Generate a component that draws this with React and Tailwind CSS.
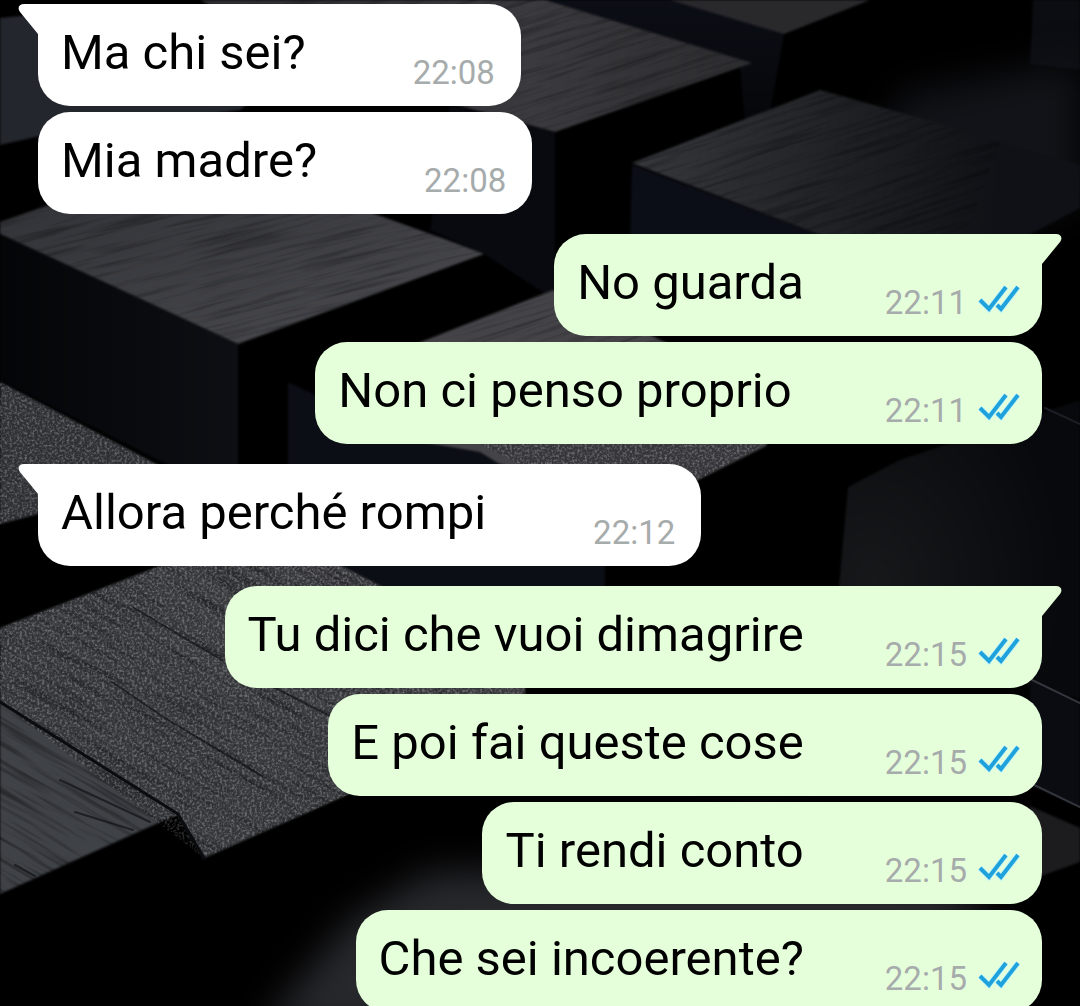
import React from "react";

const messages = [
  { id: 1, text: "Ma chi sei?", time: "22:08", sent: false, first: true },
  { id: 2, text: "Mia madre?", time: "22:08", sent: false, first: false },
  { id: 3, text: "No guarda", time: "22:11", sent: true, first: true },
  { id: 4, text: "Non ci penso proprio ", time: "22:11", sent: true, first: false },
  { id: 5, text: "Allora perché rompi", time: "22:12", sent: false, first: true },
  { id: 6, text: "Tu dici che vuoi dimagrire", time: "22:15", sent: true, first: true },
  { id: 7, text: "E poi fai queste cose", time: "22:15", sent: true, first: false },
  { id: 8, text: "Ti rendi conto", time: "22:15", sent: true, first: false },
  { id: 9, text: "Che sei incoerente?", time: "22:15", sent: true, first: false },
];

// Dark wooden blocks behind the conversation
const Wallpaper = () => (
  <svg
    className="absolute inset-0 h-full w-full"
    viewBox="0 0 1080 1006"
    preserveAspectRatio="xMidYMid slice"
    aria-hidden="true"
  >
    <defs>
      <linearGradient id="side" x1="0" y1="0" x2="0" y2="1">
        <stop offset="0" stopColor="#0c0e16" />
        <stop offset="1" stopColor="#06070a" />
      </linearGradient>
      <linearGradient id="leftSide" x1="0" y1="0" x2="1" y2="0">
        <stop offset="0" stopColor="#040507" />
        <stop offset="1" stopColor="#0d0f14" />
      </linearGradient>
      <linearGradient id="topBack" x1="0" y1="0" x2="1" y2="0">
        <stop offset="0" stopColor="#2c2c30" />
        <stop offset="0.6" stopColor="#3b3b3f" />
        <stop offset="1" stopColor="#2c2c2f" />
      </linearGradient>
      <linearGradient id="topRight" gradientUnits="userSpaceOnUse" x1="640" y1="170" x2="1000" y2="190">
        <stop offset="0" stopColor="#36373c" />
        <stop offset="0.5" stopColor="#222326" />
        <stop offset="1" stopColor="#101116" />
      </linearGradient>
      <linearGradient id="topLeft" x1="0" y1="0" x2="1" y2="1">
        <stop offset="0" stopColor="#303136" />
        <stop offset="1" stopColor="#4b4b50" />
      </linearGradient>
      <linearGradient id="topFront" x1="0" y1="1" x2="1" y2="0">
        <stop offset="0" stopColor="#3f4247" />
        <stop offset="1" stopColor="#4c4c50" />
      </linearGradient>
      <radialGradient id="glow" cx="0.15" cy="0.6" r="0.8">
        <stop offset="0" stopColor="#17181a" />
        <stop offset="1" stopColor="#08090c" />
      </radialGradient>
      <filter id="soft" colorInterpolationFilters="sRGB">
        <feGaussianBlur stdDeviation="1" />
      </filter>
      <filter id="haze" x="-30%" y="-30%" width="160%" height="160%" colorInterpolationFilters="sRGB">
        <feGaussianBlur stdDeviation="18" />
      </filter>
      <filter id="speckle" x="0" y="0" width="100%" height="100%" colorInterpolationFilters="sRGB">
        <feTurbulence type="fractalNoise" baseFrequency="0.4" numOctaves="2" seed="4" />
        <feColorMatrix type="matrix" values="3 0 0 0 -1.3  3 0 0 0 -1.3  3 0 0 0 -1.3  0 0 0 0 0.2" />
      </filter>
      <filter id="fibre" x="0" y="0" width="100%" height="100%" colorInterpolationFilters="sRGB">
        <feTurbulence type="fractalNoise" baseFrequency="0.01 0.22" numOctaves="3" seed="9" />
        <feColorMatrix type="matrix" values="0 0 0 0 0  0 0 0 0 0  0 0 0 0 0.01  3 0 0 0 -1.4" />
      </filter>
      <clipPath id="frontClip">
        <path d="M0 628 L160 566 L200 545 H300 L525 660 V716 L340 798 L204 858 L178 814 L0 896Z" />
      </clipPath>
      <clipPath id="leftClip">
        <path d="M0 222 L120 180 L350 205 L450 241 L484 254 L238 344 L0 234Z" />
      </clipPath>
      <clipPath id="backClip">
        <path d="M200 0 H545 L752 63 L555 132 L330 70Z M632 163 L820 90 L1000 142 L960 250 H860Z M395 352 L553 290 L700 350Z" />
      </clipPath>
      <clipPath id="speckleClip">
        <path d="M0 382 L160 466 L90 500 L0 524Z M480 444 H766 L690 484 H560Z M0 628 L160 566 L200 545 H300 L525 660 V716 L340 798 L204 858 L0 702Z" />
      </clipPath>
    </defs>

    <rect width="1080" height="1006" fill="#000" />

    <g filter="url(#soft)">
      {/* back row */}
      <path d="M0 18 L40 14 L300 60 L240 110 L40 136 L0 145Z" fill="#23262c" />
      <path d="M540 0 H680 L784 34 L770 112 L745 120 L740 66Z" fill="url(#side)" />
      <path d="M670 0 H870 L784 34Z" fill="#29292c" />
      <path d="M1033 0 H1080 V70 L1030 64Z" fill="#0c0d12" />
      <path d="M200 0 H545 L752 63 L555 132 L330 70Z" fill="url(#topBack)" />
      <path d="M450 105 L555 132 V300 L484 254 L430 230Z" fill="#090a10" />

      {/* right block */}
      <path d="M900 95 L1080 60 V200 L1000 230 L860 200Z" fill="#121318" filter="url(#haze)" />
      <path d="M632 163 L820 90 L920 118 L1080 165 V208 L1000 250 H860Z" fill="url(#topRight)" />
      <path d="M632 165 L860 250 L630 240Z" fill="#0c0e17" />

      {/* left block */}
      <path d="M0 222 L120 180 L350 205 L450 241 L484 254 L238 344 L0 234Z" fill="url(#topLeft)" />
      <path d="M0 234 L238 344 V500 L0 380Z" fill="url(#leftSide)" />

      {/* middle block */}
      <path d="M395 352 L553 290 L790 400 L766 446 L690 484 L560 480 L410 440Z" fill="#434348" />
      <path d="M288 382 L410 440 L480 452 L605 530 V600 H350 L288 470Z" fill="#0c0e15" />

      {/* right side, below */}
      <path d="M848 487 L900 460 L1080 400 V700 L836 620Z" fill="url(#glow)" />
      <path d="M1030 680 L1080 703 V807 L1030 785Z" fill="#0a0c12" />
      <path d="M1030 806 L1080 828 V862 L1030 880Z" fill="#1c1c1f" />

      {/* front blocks */}
      <path d="M0 382 L160 466 L90 500 L0 524Z" fill="#3b3c41" />
      <path d="M0 628 L160 566 L200 545 H300 L525 660 V716 L340 798 L204 858 L178 814 L0 750Z" fill="url(#topFront)" />
      <path d="M0 702 L178 814 L0 894Z" fill="#3f4247" />
    </g>

    <path
      d="M260 1030 L350 920 L430 872 L540 870 L760 820 L1000 900 L800 1030Z"
      fill="#27282c"
      filter="url(#haze)"
    />

    {/* fibres and speckles of the wood */}
    <g clipPath="url(#frontClip)">
      <rect x="0" y="300" width="1000" height="700" transform="rotate(30 0 500)" filter="url(#fibre)" opacity="0.35" />
    </g>
    <g clipPath="url(#leftClip)">
      <rect x="-100" y="100" width="800" height="400" transform="rotate(-14 200 270)" filter="url(#fibre)" opacity="0.25" />
    </g>
    <g clipPath="url(#backClip)">
      <rect x="150" y="-100" width="900" height="600" transform="rotate(-18 600 100)" filter="url(#fibre)" opacity="0.25" />
    </g>
    <g clipPath="url(#speckleClip)">
      <rect x="0" y="380" width="800" height="480" filter="url(#speckle)" />
    </g>

    <g fill="none" strokeLinecap="round">
      <path d="M0 702 L178 814 L204 858" stroke="#0b0c0f" strokeWidth="3" />
      <g stroke="#111216" opacity="0.7">
        <path d="M112 682 L165 718 L262 776 M134 608 L222 660 M250 675 L330 716" strokeWidth="2" />
        <path d="M60 780 L150 822 M75 812 L133 830 M15 865 L35 876" strokeWidth="2" />
      </g>
      <path d="M1030 679 L1080 703 M1030 783 L1080 807" stroke="#33353c" strokeWidth="2" />
      <path d="M1045 408 L1080 424" stroke="#1b1e25" strokeWidth="2" />
    </g>
  </svg>
);

const Tail = ({ sent }) => (
  <svg
    className={`absolute top-0 h-8 w-6 ${sent ? "-right-5 text-[#e6ffdb]" : "-left-5 -scale-x-100 text-white"}`}
    viewBox="0 0 24 32"
    fill="currentColor"
    aria-hidden="true"
  >
    <path d="M0 0 H18 C23 0 25 4 22 8 L4 30 V32 H0Z" />
  </svg>
);

const ReadTicks = () => (
  <svg className="h-8 w-11 overflow-visible" viewBox="0 2 44 32" fill="none" role="img" aria-label="Letto">
    <g stroke="#c5f7f5" strokeWidth="6">
      <path d="M2 15 L11 24 L28 2 M19 20 L23 24 L40 2" />
    </g>
    <g stroke="#1fa2dc" strokeWidth="4">
      <path d="M2 15 L11 24 L28 2 M19 20 L23 24 L40 2" />
    </g>
  </svg>
);

const Message = ({ message }) => {
  const { text, time, sent, first } = message;

  return (
    <li className={`flex ${sent ? "justify-end" : "justify-start"} ${first ? "mt-5 first:mt-0" : "mt-1.5"}`}>
      <div
        className={`relative flex h-[102px] items-end rounded-[32px] pl-[23px] ${
          sent ? "bg-[#e6ffdb] pr-5" : "bg-white pr-[26px]"
        } ${first ? (sent ? "rounded-tr-none" : "rounded-tl-none") : ""}`}
      >
        {first && <Tail sent={sent} />}
        <p className={`pb-[25px] text-[49px] leading-[56px] whitespace-pre text-black ${sent ? "mr-[81px]" : "mr-[107px]"}`}>
          {text}
        </p>
        <div className="flex items-center gap-[11px] pb-[13px]">
          <time className="text-[33px] leading-10 text-[#a6abab]">{time}</time>
          {sent && <ReadTicks />}
        </div>
      </div>
    </li>
  );
};

const App = () => {
  return (
    <main className="relative h-screen overflow-hidden bg-black font-[Roboto,sans-serif]">
      <Wallpaper />
      <ul className="relative px-[38px] pt-1">
        {messages.map((message) => (
          <Message key={message.id} message={message} />
        ))}
      </ul>
    </main>
  );
};

export default App;
